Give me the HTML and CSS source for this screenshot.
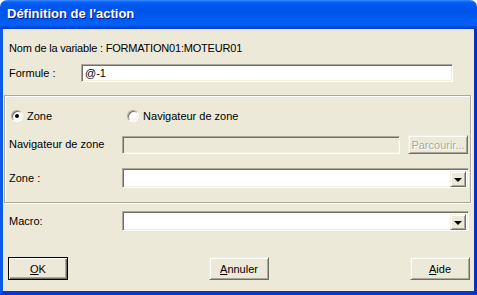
FILE: index.html
```html
<!DOCTYPE html>
<html lang="fr">
<head>
    <meta charset="UTF-8">
    <title>Définition de l'action</title>
    <link rel="stylesheet" href="styles.css">
</head>
<body>
    <div class="window">
        <div class="titlebar">Définition de l'action</div>

        <div class="client">
            <div class="varname">Nom de la variable : FORMATION01:MOTEUR01</div>

            <div class="row formule">
                <label>Formule :</label>
                <div class="edit sunken">@-1</div>
            </div>

            <div class="group">
                <div class="radios">
                    <span class="option"><span class="radio checked"></span>Zone</span>
                    <span class="option second"><span class="radio"></span>Navigateur de zone</span>
                </div>

                <div class="row nav">
                    <label>Navigateur de zone</label>
                    <div class="edit sunken disabled"></div>
                    <button class="btn small" disabled>Parcourir...</button>
                </div>

                <div class="row zone">
                    <label>Zone :</label>
                    <div class="combo sunken"><span class="drop raised"><i></i></span></div>
                </div>
            </div>

            <div class="row macro">
                <label>Macro:</label>
                <div class="combo sunken"><span class="drop raised"><i></i></span></div>
            </div>

            <div class="buttons">
                <button class="btn default"><u>O</u>K</button>
                <button class="btn"><u>A</u>nnuler</button>
                <button class="btn"><u>A</u>ide</button>
            </div>
        </div>
    </div>
</body>
</html>
```

FILE: styles.css
```css
body {
    margin: 0;
    background: #fff;
    font-family: 'Liberation Sans', Arial, sans-serif;
    font-size: 11px;
    color: #000;
}
.window {
    width: 477px;
    height: 295px;
    display: flex;
    flex-direction: column;
}
.titlebar {
    height: 29px;
    flex: none;
    box-sizing: border-box;
    padding: 6px 0 0 7px;
    border-radius: 7px 7px 0 0;
    background: linear-gradient(to bottom, #3a8cff 0, #0a62f4 2px, #0058ee 5px, #0054e9 12px, #005cf2 20px, #0062f7 25px, #0046dc 27px, #003bd0 29px);
    color: #fff;
    font-weight: bold;
    font-size: 13px;
    line-height: 16px;
    text-shadow: 1px 1px 0 #0a1883;
}
.client {
    flex: 1;
    background: #ece9d8;
    border-left: 3px solid #0a5ce8;
    border-right: 3px solid #0a2cc0;
    border-bottom: 4px solid #0836d4;
    display: flex;
    flex-direction: column;
}
.varname {
    margin: 13px 0 0 6px;
    line-height: 13px;
    letter-spacing: -0.2px;
}
.row {
    display: flex;
    align-items: center;
}
.row label {
    flex: none;
    line-height: 13px;
}
.formule {
    margin: 9px 0 0 6px;
}
.formule label {
    width: 72px;
}
.formule .edit {
    width: 372px;
}

/* champs creusés / boutons en relief */
.sunken {
    box-sizing: border-box;
    border: 1px solid;
    border-color: #aca899 #fff #fff #aca899;
    box-shadow: inset 1px 1px 0 #716f64, inset -1px -1px 0 #f1efe2;
    background: #fff;
}
.raised {
    box-sizing: border-box;
    border: 1px solid;
    border-color: #f1efe2 #716f64 #716f64 #f1efe2;
    box-shadow: inset 1px 1px 0 #fff, inset -1px -1px 0 #aca899;
    background: #ece9d8;
}
.edit {
    height: 18px;
    padding: 2px 0 0 3px;
    line-height: 13px;
}
.edit.disabled {
    background: #ece9d8;
}

.group {
    margin: 13px 0 0 1px;
    width: 467px;
    height: 108px;
    box-sizing: border-box;
    border: 1px solid #aca899;
    box-shadow: 1px 1px 0 #fff, inset 1px 1px 0 #fff;
    padding: 0 0 0 4px;
}
.radios {
    display: flex;
    align-items: center;
    height: 16px;
    margin-top: 12px;
    padding-left: 2px;
}
.option {
    display: flex;
    align-items: center;
    gap: 4px;
}
.option.second {
    margin-left: 75px;
}
.radio {
    width: 12px;
    height: 12px;
    box-sizing: border-box;
    border-radius: 50%;
    border: 1px solid;
    border-color: #aca899 #fff #fff #aca899;
    box-shadow: inset 1px 1px 0 #716f64, inset -1px -1px 0 #f1efe2;
    background: #fff;
    position: relative;
}
.radio.checked::after {
    content: "";
    position: absolute;
    left: 3px;
    top: 3px;
    width: 4px;
    height: 4px;
    border-radius: 50%;
    background: #000;
}
.nav {
    margin-top: 11px;
}
.nav label,
.zone label,
.macro label {
    width: 113px;
}
.nav .edit {
    width: 278px;
}
.btn {
    font-family: 'Liberation Sans', Arial, sans-serif;
    font-size: 11px;
    color: #000;
    box-sizing: border-box;
    width: 60px;
    height: 23px;
    padding: 0;
    border: 1px solid;
    border-color: #f1efe2 #716f64 #716f64 #f1efe2;
    box-shadow: inset 1px 1px 0 #fff, inset -1px -1px 0 #aca899;
    background: #ece9d8;
}
.btn.small {
    width: 60px;
    height: 19px;
    margin-left: 8px;
}
.btn:disabled {
    color: #aca899;
    text-shadow: 1px 1px 0 #fff;
}
.btn.default {
    border: 1px solid #000;
    box-shadow: inset 1px 1px 0 #fff, inset -1px -1px 0 #716f64, inset -2px -2px 0 #aca899;
}
.zone {
    margin-top: 14px;
}
.combo {
    width: 347px;
    height: 20px;
    display: flex;
    justify-content: flex-end;
    padding: 2px;
}
.drop {
    width: 16px;
    height: 16px;
    display: flex;
    align-items: center;
    justify-content: center;
}
.drop i {
    width: 0;
    height: 0;
    border-left: 4px solid transparent;
    border-right: 4px solid transparent;
    border-top: 4px solid #000;
    margin-top: 1px;
}
.macro {
    margin: 8px 0 0 6px;
}
.buttons {
    display: flex;
    justify-content: space-between;
    margin-top: 26px;
    padding: 0 4px 0 5px;
}
```
